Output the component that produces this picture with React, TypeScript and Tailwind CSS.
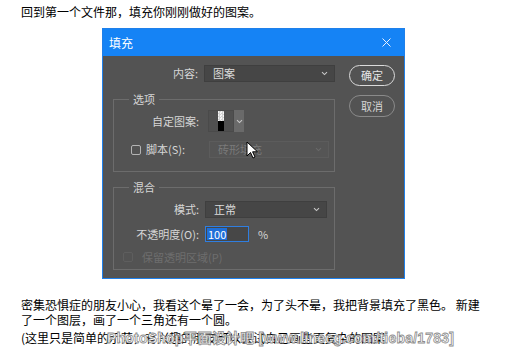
import React from "react";

const Chevron = ({ color = "#c8c8c8" }: { color?: string }) => (
  <svg width="7" height="5" viewBox="0 0 7 5" fill="none">
    <path d="M1 1.2 L3.5 3.6 L6 1.2" stroke={color} strokeWidth="1.1" />
  </svg>
);

const Select = ({ value, w, disabled = false }: { value: string; w: string; disabled?: boolean }) => (
  <div
    className={`flex h-[17px] items-center justify-between border pl-[8px] pr-[6px] ${w} ${
      disabled ? "border-[#5c5c5c] bg-[#555555] text-[#7a7a7a]" : "border-[#3f3f3f] bg-[#464646] text-[#dcdcdc]"
    }`}
  >
    <span className="leading-none">{value}</span>
    <Chevron color={disabled ? "#6a6a6a" : "#c8c8c8"} />
  </div>
);

const Check = ({ disabled = false }: { disabled?: boolean }) => (
  <div
    className={`h-[10px] w-[10px] rounded-[2px] border ${
      disabled ? "border-[#5e5e5e]" : "border-[#b4b4b4]"
    }`}
  />
);

export default function App() {
  return (
    <div className="relative h-[355px] w-[514px] overflow-hidden bg-white font-['Noto_Sans_CJK_SC',sans-serif] text-black">
      <p className="pl-[21px] pt-[4px] text-[12px] leading-[15px]">
        回到第一个文件那，填充你刚刚做好的图案。
      </p>

      {/* dialog */}
      <div className="ml-[102px] mt-[9px] w-[303px] border border-[#1f80ea] text-[11px] text-[#d6d6d6]">
        <div className="flex h-[27px] items-center justify-between bg-[#1583f5] pl-[6px] pr-[13px]">
          <span className="text-[12px] text-white">填充</span>
          <svg width="9" height="9" viewBox="0 0 9 9">
            <path d="M0.5 0.5 L8.5 8.5 M8.5 0.5 L0.5 8.5" stroke="#e8f1ff" strokeWidth="1" />
          </svg>
        </div>

        <div className="flex gap-[14px] bg-[#535353] pb-[8px] pl-[10px] pr-[9px] pt-[9px]">
          <div className="flex w-[222px] flex-col">
            <div className="flex items-center gap-[6px]">
              <span className="w-[85px] text-right">内容:</span>
              <Select value="图案" w="w-[131px]" />
            </div>

            <fieldset className="mt-[10px] border border-[#6c6c6c] pb-[13px]">
              <legend className="ml-[15px] px-[4px] text-[11px] leading-[14px] text-[#d6d6d6]">选项</legend>
              <div className="mt-[4px] flex items-center">
                <span className="w-[85px] text-right">自定图案:</span>
                <div className="ml-[9px] flex h-[22px]">
                  <div className="flex w-[26px] items-center justify-center border border-[#4a4a4a] bg-[#505050]">
                    <div className="flex h-[20px] w-[6px] flex-col">
                      <div className="h-[10px] bg-[repeating-conic-gradient(#d0d0d0_0_25%,#f4f4f4_0_50%)] bg-[length:3px_3px]" />
                      <div className="h-[10px] bg-black" />
                    </div>
                  </div>
                  <div className="flex w-[10px] items-center justify-center bg-[#6a6a6a]">
                    <Chevron />
                  </div>
                </div>
              </div>
              <div className="mt-[9px] flex items-center">
                <div className="ml-[17px] mr-[5px]">
                  <Check />
                </div>
                <span className="w-[63px]">脚本(S):</span>
                <Select value="砖形填充" w="w-[120px]" disabled />
              </div>
            </fieldset>

            <fieldset className="mt-[8px] border border-[#6c6c6c] pb-[4px]">
              <legend className="ml-[15px] px-[4px] text-[11px] leading-[14px] text-[#d6d6d6]">混合</legend>
              <div className="mt-[7px] flex items-center gap-[6px]">
                <span className="w-[85px] text-right">模式:</span>
                <Select value="正常" w="w-[122px]" />
              </div>
              <div className="mt-[8px] flex items-center gap-[6px]">
                <span className="w-[85px] text-right">不透明度(O):</span>
                <div className="flex h-[16px] w-[44px] items-center border border-[#2f7ee0] bg-[#474747] pl-[1px]">
                  <span className="bg-[#1f6fd8] px-[1px] text-[11px] leading-[12px] text-white">100</span>
                </div>
                <span className="ml-[3px]">%</span>
              </div>
              <div className="mt-[6px] flex items-center text-[#6e6e6e]">
                <div className="ml-[9px] mr-[9px]">
                  <Check disabled />
                </div>
                <span>保留透明区域(P)</span>
              </div>
            </fieldset>
          </div>

          <div className="flex flex-col gap-[9px]">
            <button className="h-[21px] w-[46px] rounded-full border-[1.5px] border-[#dadada] text-[11px] text-[#e6e6e6]">
              确定
            </button>
            <button className="h-[22px] w-[46px] rounded-full border border-[#8a8a8a] text-[11px] text-[#d6d6d6]">
              取消
            </button>
          </div>
        </div>
      </div>

      {/* mouse cursor */}
      <svg className="absolute left-[246px] top-[141px]" width="13" height="19" viewBox="0 0 13 19">
        <path d="M1 1 L1 15 L4.5 11.5 L7 17 L9 16 L6.6 10.8 L11.5 10.8 Z" fill="white" stroke="black" strokeWidth="1" />
      </svg>

      <div className="mt-[18px] pl-[21px] text-[12px] leading-[15px]">
        <p>
          密集恐惧症的朋友小心，我看这个晕了一会，为了头不晕，我把背景填充了黑色。 新建
          <br />
          了一个图层，画了一个三角还有一个圆。
        </p>
        <p className="relative mt-[3px]">
          (这里只是简单的示范，有兴趣的朋友可以尝试自己画些更复杂的图案
          <span className="absolute left-[86px] top-0 whitespace-nowrap font-['Liberation_Sans',sans-serif] text-[14px] font-bold leading-[15px] tracking-[0.2px] text-white [-webkit-text-stroke:0.8px_#8c8c8c]">
            PhotoShop<span className="font-['Noto_Sans_CJK_SC',sans-serif]">平面设计吧</span>
            {" "}[www.linecg.com/tieba/1783]
          </span>
        </p>
      </div>
    </div>
  );
}
